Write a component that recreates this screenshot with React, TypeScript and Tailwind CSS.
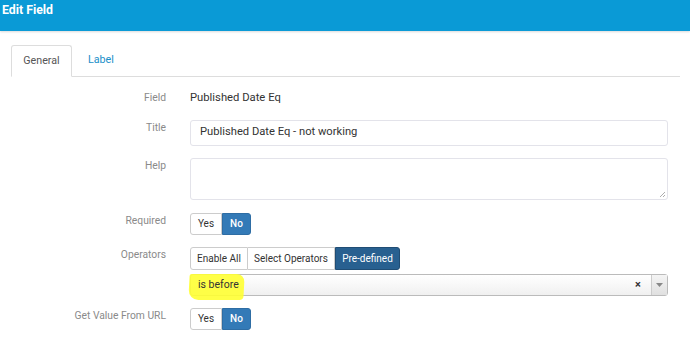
import React from 'react';

const labelCls = "w-[155px] shrink-0 text-right text-[10.3px] leading-[16px] text-[#8a8a8a]";

function Row({ label, children, className = '' }: { label: string; children: React.ReactNode; className?: string }) {
    return (
        <div className={`flex gap-[24px] ${className}`}>
            <div className={labelCls}>{label}</div>
            <div className="flex-1">{children}</div>
        </div>
    );
}

function YesNo() {
    return (
        <div className="flex h-[22px] w-fit text-[10px]">
            <div className="flex w-[32px] items-center justify-center rounded-l-[3px] border border-[#ccc] bg-white text-[#333]">Yes</div>
            <div className="flex w-[29px] items-center justify-center rounded-r-[3px] border border-[#2e6da4] bg-[#337ab7] font-medium text-white">No</div>
        </div>
    );
}

export default function App() {
    return (
        <div className="h-[359px] w-[690px] overflow-hidden bg-white font-['Roboto',sans-serif]">
            <div className="flex h-[31px] items-start bg-[#0a9ad6] pl-[2px] pt-[1px] shadow-[0_1px_2px_rgba(0,0,0,0.15)]">
                <span className="text-[12.3px] font-bold leading-[18px] text-white">Edit Field</span>
            </div>

            <div className="pl-[11px] pr-[10px] pt-[14px]">
                {/* tabs */}
                <div className="flex h-[32px] border-b border-[#ddd]">
                    <div className="-mb-px flex w-[61px] items-center justify-center rounded-t-[3px] border border-b-white border-[#ddd] bg-white text-[10.7px] text-[#555]">
                        General
                    </div>
                    <div className="flex items-center pl-[16px] text-[10.7px] text-[#1a8fc9]">Label</div>
                </div>

                <div className="pr-[12px] pt-[13px]">
                    <Row label="Field" className="items-center">
                        <div className="text-[11.25px] text-[#333]">Published Date Eq</div>
                    </Row>

                    <Row label="Title" className="mt-[13px]">
                        <div className="flex h-[26px] items-center rounded-[3px] border border-[#e3e3ea] px-[9px] text-[11.2px] text-[#333]">
                            Published Date Eq - not working
                        </div>
                    </Row>

                    <Row label="Help" className="mt-[12px]">
                        <div className="relative h-[42px] rounded-[3px] border border-[#e3e3ea]">
                            <svg className="absolute bottom-[1px] right-[1px]" width="7" height="7" viewBox="0 0 7 7">
                                <path d="M6 1L1 6M6 4L4 6" stroke="#999" strokeWidth="0.8" />
                            </svg>
                        </div>
                    </Row>

                    <Row label="Required" className="mt-[13px]">
                        <YesNo />
                    </Row>

                    <Row label="Operators" className="mt-[12px]">
                        <div className="flex h-[23px] w-fit text-[10px]">
                            <div className="flex w-[58px] items-center justify-center rounded-l-[3px] border border-[#ccc] bg-white text-[#333]">Enable All</div>
                            <div className="flex w-[87px] items-center justify-center border border-l-0 border-[#ccc] bg-white text-[#333]">Select Operators</div>
                            <div className="flex w-[65px] items-center justify-center rounded-r-[3px] border border-[#204d74] bg-[#286090] text-white">Pre-defined</div>
                        </div>
                        <div className="relative mt-[4px] flex h-[22px] rounded-[3px] border border-[#bbb] bg-gradient-to-b from-white to-[#f0f0f0]">
                            <div className="absolute left-[-2px] top-[-1px] h-[26px] w-[55px] -skew-x-3 rounded-[2px_8px_4px_10px] bg-[#ffff33] opacity-90" />
                            <div className="relative flex flex-1 items-center px-[7px] text-[10.5px] text-[#333]">is before</div>
                            <div className="relative flex w-[26px] items-center justify-center text-[11px] font-bold text-[#333]">×</div>
                            <div className="relative flex w-[16px] items-center justify-center border-l border-[#ccc] bg-gradient-to-b from-[#f4f4f4] to-[#e0e0e0]">
                                <svg width="7" height="4" viewBox="0 0 7 4">
                                    <path d="M0 0H7L3.5 4Z" fill="#888" />
                                </svg>
                            </div>
                        </div>
                    </Row>

                    <Row label="Get Value From URL" className="mt-[12px]">
                        <YesNo />
                    </Row>
                </div>
            </div>
        </div>
    );
}
